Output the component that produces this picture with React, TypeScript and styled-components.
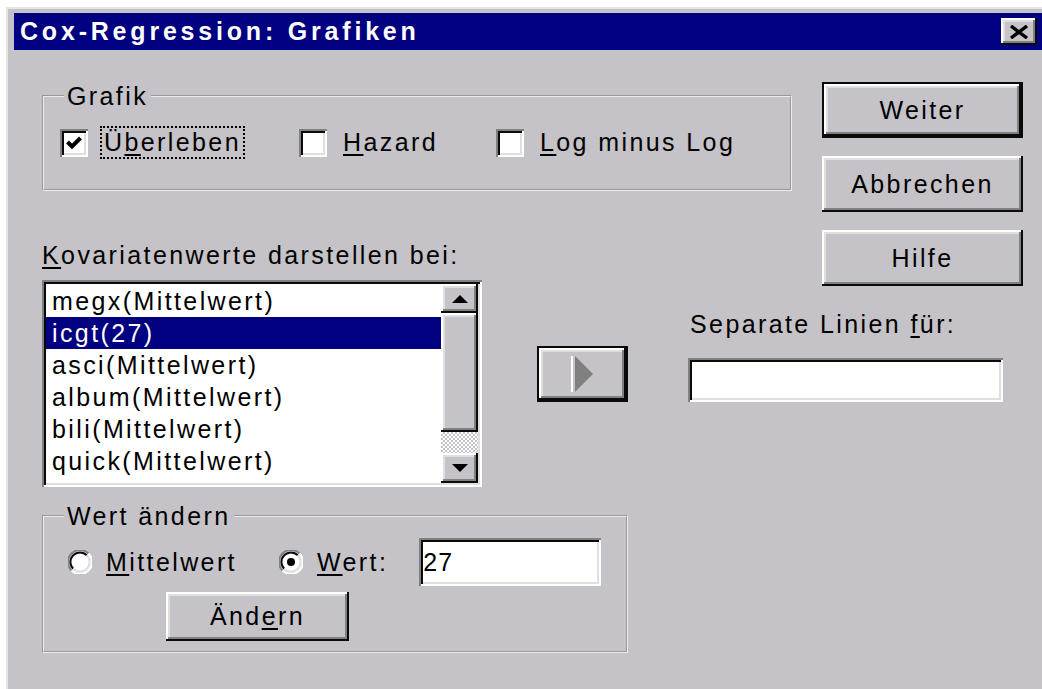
import React from "react";
import styled, { createGlobalStyle, css } from "styled-components";

const face = "#c5c3c7";

const GlobalStyle = createGlobalStyle`
  html, body {
    margin: 0;
    padding: 0;
    background: #fff;
    overflow: hidden;
  }
  body {
    font-family: "Liberation Sans", Arial, sans-serif;
    font-size: 25px;
    letter-spacing: 2.4px;
    color: #000;
  }
  u {
    text-decoration-thickness: 2px;
    text-underline-offset: 3px;
  }
`;

// classic 3d bevels, doubled for the large dialog
const raised = css`
  box-shadow: inset -2px -2px #0a0a0a, inset 2px 2px #fff,
    inset -4px -4px #808080, inset 4px 4px #dfdfdf;
`;

const sunken = css`
  box-shadow: inset 2px 2px #808080, inset -2px -2px #fff,
    inset 4px 4px #0a0a0a, inset -4px -4px #dfdfdf;
`;

const Window = styled.div`
  box-sizing: border-box;
  width: 1036px;
  height: 690px;
  margin: 7px 0 0 6px;
  padding: 4px 0 0 6px;
  background: ${face};
  border-top: 2px solid #e4e3e6;
  border-left: 2px solid #e4e3e6;
`;

const TitleBar = styled.div`
  height: 37px;
  display: flex;
  align-items: center;
  justify-content: space-between;
  padding: 0 5px 0 6px;
  background: #000080;
`;

const Title = styled.span`
  color: #fff;
  font-weight: bold;
  font-size: 25px;
  letter-spacing: 3.8px;
`;

const CloseButton = styled.div`
  box-sizing: border-box;
  width: 36px;
  height: 27px;
  display: flex;
  align-items: center;
  justify-content: center;
  background: ${face};
  ${raised}
`;

const Body = styled.div`
  display: grid;
  grid-template-columns: 440px 55px 91px 60px 134px 201px;
  grid-template-rows: 150px 48px 207px auto;
  padding: 32px 0 0 28px;
`;

const Group = styled.fieldset<{ $width: number }>`
  box-sizing: border-box;
  width: ${(p) => p.$width}px;
  margin: 0;
  padding-left: 0;
  padding-right: 0;
  border: 2px groove #ececec;
  min-width: 0;
`;

const GrafikGroup = styled(Group)`
  grid-column: 1 / 6;
  grid-row: 1;
  align-self: start;
  margin-top: 0;
  padding-top: 16px;
  padding-bottom: 30px;
`;

const WertGroup = styled(Group)`
  grid-column: 1 / 4;
  grid-row: 4;
  align-self: start;
  margin-top: 15px;
  padding-top: 8px;
  padding-bottom: 10px;
`;

const Legend = styled.legend`
  margin-left: 20px;
  padding: 0 3px;
  line-height: 28px;
`;

const CheckRow = styled.div`
  display: flex;
  align-items: center;
  gap: 54px;
  padding-left: 16px;
`;

const Option = styled.label`
  display: flex;
  align-items: center;
  gap: 12px;
`;

const CheckBox = styled.span`
  box-sizing: border-box;
  width: 28px;
  height: 28px;
  display: flex;
  align-items: center;
  justify-content: center;
  background: #fff;
  ${sunken}
`;

const Caption = styled.span<{ $focused?: boolean }>`
  line-height: 29px;
  padding: 0 2px;
  border: 2px dotted ${(p) => (p.$focused ? "#000" : "transparent")};
`;

const Buttons = styled.div`
  grid-column: 6;
  grid-row: 1 / 4;
  align-self: start;
  display: flex;
  flex-direction: column;
  gap: 18px;
`;

const Button = styled.div<{ $default?: boolean; $w: number; $h: number }>`
  box-sizing: border-box;
  width: ${(p) => p.$w}px;
  height: ${(p) => p.$h}px;
  display: flex;
  align-items: center;
  justify-content: center;
  background: ${face};
  border: ${(p) => (p.$default ? "2px solid #0a0a0a" : "none")};
  ${raised}
`;

const ListLabel = styled.div`
  grid-column: 1 / 4;
  grid-row: 2;
  align-self: end;
  margin-bottom: 11px;
  line-height: 28px;
`;

const ListBox = styled.div`
  grid-column: 1;
  grid-row: 3;
  box-sizing: border-box;
  width: 440px;
  height: 207px;
  padding: 4px;
  display: flex;
  background: #fff;
  ${sunken}
`;

const Items = styled.div`
  flex: 1;
  padding-top: 1px;
`;

const Item = styled.div<{ $selected?: boolean }>`
  height: 32px;
  line-height: 32px;
  padding-left: 6px;
  white-space: nowrap;
  background: ${(p) => (p.$selected ? "#000080" : "transparent")};
  color: ${(p) => (p.$selected ? "#fff" : "#000")};
`;

const ScrollBar = styled.div`
  width: 37px;
  display: flex;
  flex-direction: column;
`;

const ScrollButton = styled.div<{ $h: number }>`
  box-sizing: border-box;
  height: ${(p) => p.$h}px;
  display: flex;
  align-items: center;
  justify-content: center;
  background: ${face};
  ${raised}
`;

const Track = styled.div`
  flex: 1;
  background: repeating-conic-gradient(${face} 0 25%, #fff 0 50%) 0 0 / 4px 4px;
`;

const MoveButton = styled(Button)`
  grid-column: 3;
  grid-row: 3;
  align-self: start;
  margin-top: 66px;
`;

const SeparateBlock = styled.div`
  grid-column: 5 / 7;
  grid-row: 3;
  align-self: start;
  margin-top: 30px;
  display: flex;
  flex-direction: column;
  gap: 20px;
`;

const FieldLabel = styled.div`
  line-height: 28px;
  padding-left: 2px;
`;

const TextField = styled.div<{ $w: number; $h: number }>`
  box-sizing: border-box;
  width: ${(p) => p.$w}px;
  height: ${(p) => p.$h}px;
  padding: 0 6px 0 4px;
  display: flex;
  align-items: center;
  background: #fff;
  letter-spacing: 1px;
  ${sunken}
`;

const RadioRow = styled.div`
  display: flex;
  align-items: center;
  padding-left: 24px;
`;

const RadioOption = styled.label<{ $gapAfter: number }>`
  display: flex;
  align-items: center;
  gap: 14px;
  margin-right: ${(p) => p.$gapAfter}px;
`;

const ApplyButton = styled(Button)`
  margin: 6px 0 0 122px;
`;

const Check = () => (
  <svg width="16" height="14" viewBox="0 0 16 14">
    <path d="M1.5 6 L6 10.5 L14.5 2" fill="none" stroke="#000" strokeWidth="4" />
  </svg>
);

// sunken round option button, dot when selected
const Radio = ({ checked }: { checked?: boolean }) => (
  <svg width="24" height="24" viewBox="0 0 24 24">
    <circle cx="12" cy="12" r="11" fill="#fff" />
    <path d="M3.5 20.5 A11 11 0 0 1 20.5 3.5" fill="none" stroke="#808080" strokeWidth="2" />
    <path d="M20.5 3.5 A11 11 0 0 1 3.5 20.5" fill="none" stroke="#fff" strokeWidth="2" />
    <path d="M5.2 18.8 A9 9 0 0 1 18.8 5.2" fill="none" stroke="#0a0a0a" strokeWidth="2" />
    <path d="M18.8 5.2 A9 9 0 0 1 5.2 18.8" fill="none" stroke="#dfdfdf" strokeWidth="2" />
    {checked && <circle cx="12" cy="12" r="4" fill="#000" />}
  </svg>
);

const Arrow = ({ up }: { up?: boolean }) => (
  <svg width="16" height="8" viewBox="0 0 16 8">
    <polygon points={up ? "8,0 16,8 0,8" : "0,0 16,0 8,8"} fill="#000" />
  </svg>
);

const MoveArrow = () => (
  <svg width="24" height="36" viewBox="0 0 24 36">
    <rect x="0" y="0" width="2" height="36" fill="#fff" />
    <polygon points="4,0 22,18 4,36" fill="#808080" />
  </svg>
);

const CloseGlyph = () => (
  <svg width="20" height="14" viewBox="0 0 20 14">
    <path d="M2 1 L18 13 M18 1 L2 13" stroke="#000" strokeWidth="3.4" />
  </svg>
);

const covariates = [
  "megx(Mittelwert)",
  "icgt(27)",
  "asci(Mittelwert)",
  "album(Mittelwert)",
  "bili(Mittelwert)",
  "quick(Mittelwert)",
];

export default function App() {
  return (
    <>
      <GlobalStyle />
      <Window>
        <TitleBar>
          <Title>Cox-Regression: Grafiken</Title>
          <CloseButton>
            <CloseGlyph />
          </CloseButton>
        </TitleBar>
        <Body>
          <GrafikGroup $width={750}>
            <Legend>Grafik</Legend>
            <CheckRow>
              <Option>
                <CheckBox>
                  <Check />
                </CheckBox>
                <Caption $focused>
                  Ü<u>b</u>erleben
                </Caption>
              </Option>
              <Option>
                <CheckBox />
                <Caption>
                  <u>H</u>azard
                </Caption>
              </Option>
              <Option>
                <CheckBox />
                <Caption>
                  <u>L</u>og minus Log
                </Caption>
              </Option>
            </CheckRow>
          </GrafikGroup>

          <Buttons>
            <Button $default $w={201} $h={56}>
              Weiter
            </Button>
            <Button $w={201} $h={56}>
              Abbrechen
            </Button>
            <Button $w={201} $h={56}>
              Hilfe
            </Button>
          </Buttons>

          <ListLabel>
            <u>K</u>ovariatenwerte darstellen bei:
          </ListLabel>

          <ListBox>
            <Items>
              {covariates.map((c, i) => (
                <Item key={c} $selected={i === 1}>
                  {c}
                </Item>
              ))}
            </Items>
            <ScrollBar>
              <ScrollButton $h={29}>
                <Arrow up />
              </ScrollButton>
              <ScrollButton $h={119} />
              <Track />
              <ScrollButton $h={30}>
                <Arrow />
              </ScrollButton>
            </ScrollBar>
          </ListBox>

          <MoveButton $default $w={91} $h={56}>
            <MoveArrow />
          </MoveButton>

          <SeparateBlock>
            <FieldLabel>
              Separate Linien <u>f</u>ür:
            </FieldLabel>
            <TextField $w={315} $h={44} />
          </SeparateBlock>

          <WertGroup $width={586}>
            <Legend>Wert ändern</Legend>
            <RadioRow>
              <RadioOption $gapAfter={42}>
                <Radio />
                <span>
                  <u>M</u>ittelwert
                </span>
              </RadioOption>
              <RadioOption $gapAfter={31}>
                <Radio checked />
                <span>
                  <u>W</u>ert:
                </span>
              </RadioOption>
              <TextField $w={182} $h={48}>
                27
              </TextField>
            </RadioRow>
            <ApplyButton $w={183} $h={49}>
              Änd<u>e</u>rn
            </ApplyButton>
          </WertGroup>
        </Body>
      </Window>
    </>
  );
}
